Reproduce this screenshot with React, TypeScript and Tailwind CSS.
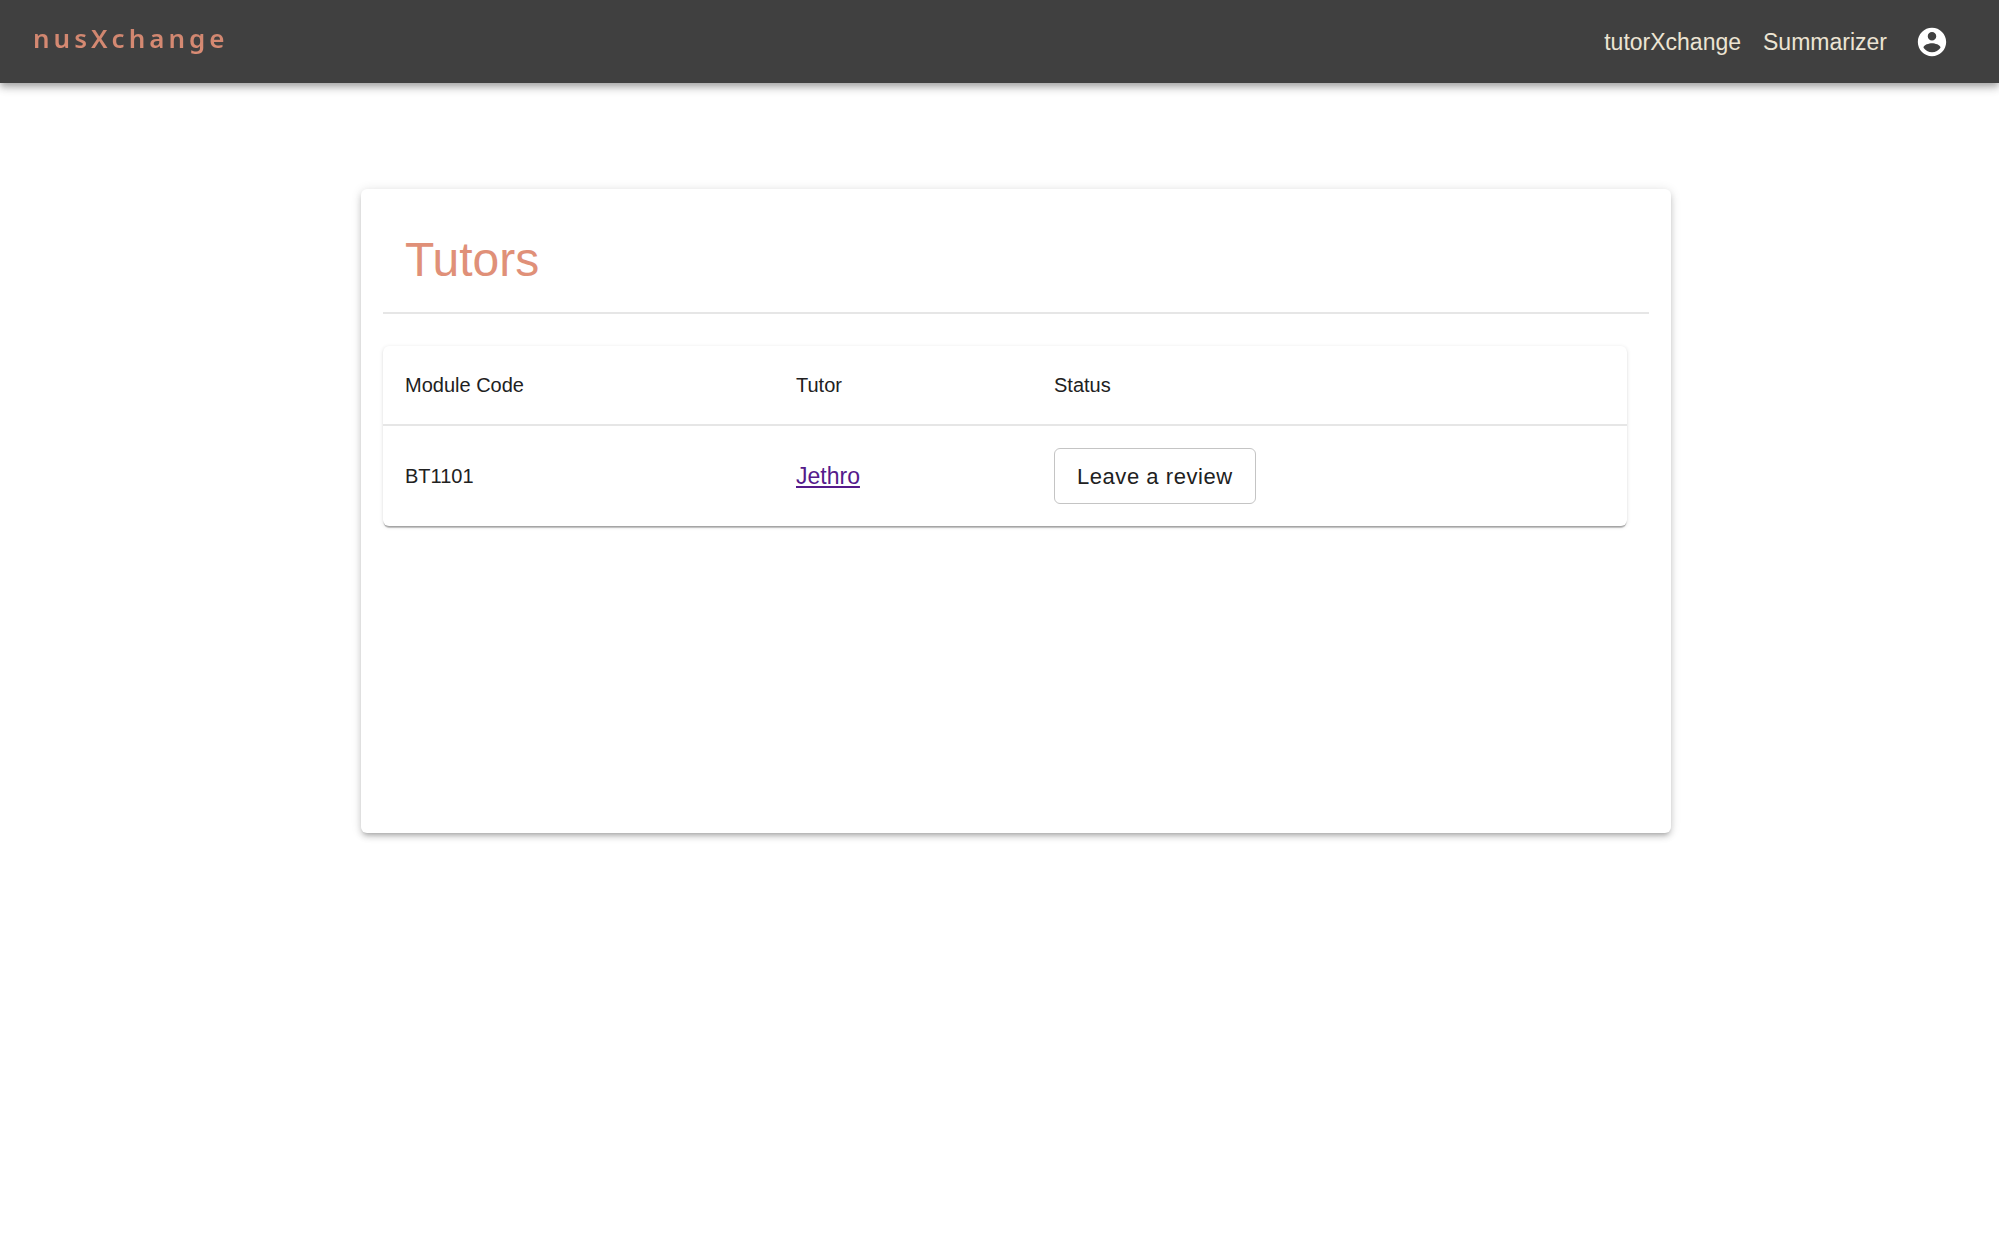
const rows = [{ module: "BT1101", tutor: "Jethro" }];

function AccountIcon() {
  return (
    <svg viewBox="0 0 24 24" className="size-[34px] fill-current" aria-hidden="true">
      <path d="M12 2C6.48 2 2 6.48 2 12s4.48 10 10 10 10-4.48 10-10S17.52 2 12 2zm0 3c1.66 0 3 1.34 3 3s-1.34 3-3 3-3-1.34-3-3 1.34-3 3-3zm0 14.2c-2.5 0-4.71-1.28-6-3.22.03-1.99 4-3.08 6-3.08 1.99 0 5.97 1.09 6 3.08-1.29 1.94-3.5 3.22-6 3.22z" />
    </svg>
  );
}

function Header() {
  return (
    <header className="flex h-[83px] items-center justify-between bg-[#404040] pr-[50px] pl-[33px] shadow-[0_3px_6px_-1px_rgba(0,0,0,0.2),0_6px_7px_0_rgba(0,0,0,0.14),0_1px_14px_0_rgba(0,0,0,0.12)]">
      <a
        href="#home"
        className="bg-linear-to-b from-[#c9826c] to-[#e08f77] bg-clip-text pb-2 font-['Noto_Sans',sans-serif] text-[26px] leading-9 font-semibold tracking-[4px] text-transparent"
      >
        nusXchange
      </a>
      <nav className="flex items-center text-[23px] leading-8 text-[#ece4d3]">
        <a href="#tutors" className="mr-[22px]">tutorXchange</a>
        <a href="#summarizer" className="mr-7">Summarizer</a>
        <button type="button" aria-label="Account" className="text-white">
          <AccountIcon />
        </button>
      </nav>
    </header>
  );
}

function TutorTable() {
  return (
    <div className="mt-8 mr-[22px] rounded-md bg-white shadow-[0_3px_1px_-1px_rgba(0,0,0,0.2),0_1px_1px_0_rgba(0,0,0,0.14),0_1px_4px_0_rgba(0,0,0,0.12)]">
      <table className="w-full table-fixed text-left">
        <colgroup>
          <col className="w-[391px]" />
          <col className="w-[258px]" />
          <col />
        </colgroup>
        <thead>
          <tr className="h-[79px] border-b-2 border-[#e6e6e6] text-[20px]">
            <th scope="col" className="px-[22px] font-normal">Module Code</th>
            <th scope="col" className="px-[22px] font-normal">Tutor</th>
            <th scope="col" className="px-[22px] font-normal">Status</th>
          </tr>
        </thead>
        <tbody>
          {rows.map((row) => (
            <tr key={row.module} className="h-[101px]">
              <td className="px-[22px] text-[20px]">{row.module}</td>
              <td className="px-[22px] text-[23px]">
                <a href="#jethro" className="text-[#551a8b] underline">{row.tutor}</a>
              </td>
              <td className="px-[22px]">
                <button
                  type="button"
                  className="h-14 rounded-md border border-[#c4c4c4] px-[22px] text-[22px] tracking-wide"
                >
                  Leave a review
                </button>
              </td>
            </tr>
          ))}
        </tbody>
      </table>
    </div>
  );
}

export default function App() {
  return (
    <div className="min-h-screen bg-white font-['Liberation_Sans',Arial,sans-serif] text-[#212121]">
      <Header />
      <main className="pt-[106px] pr-[328px] pl-[361px]">
        <section className="min-h-[644px] rounded-md bg-white px-[22px] shadow-[0_4px_4px_-3px_rgba(0,0,0,0.2),0_4px_6px_0_rgba(0,0,0,0.14),0_1px_11px_0_rgba(0,0,0,0.12)]">
          <h1 className="border-b-2 border-[#e6e6e6] px-[22px] pt-[42px] pb-[23px] text-[48px] leading-[58px] text-[#e09078]">
            Tutors
          </h1>
          <TutorTable />
        </section>
      </main>
    </div>
  );
}
